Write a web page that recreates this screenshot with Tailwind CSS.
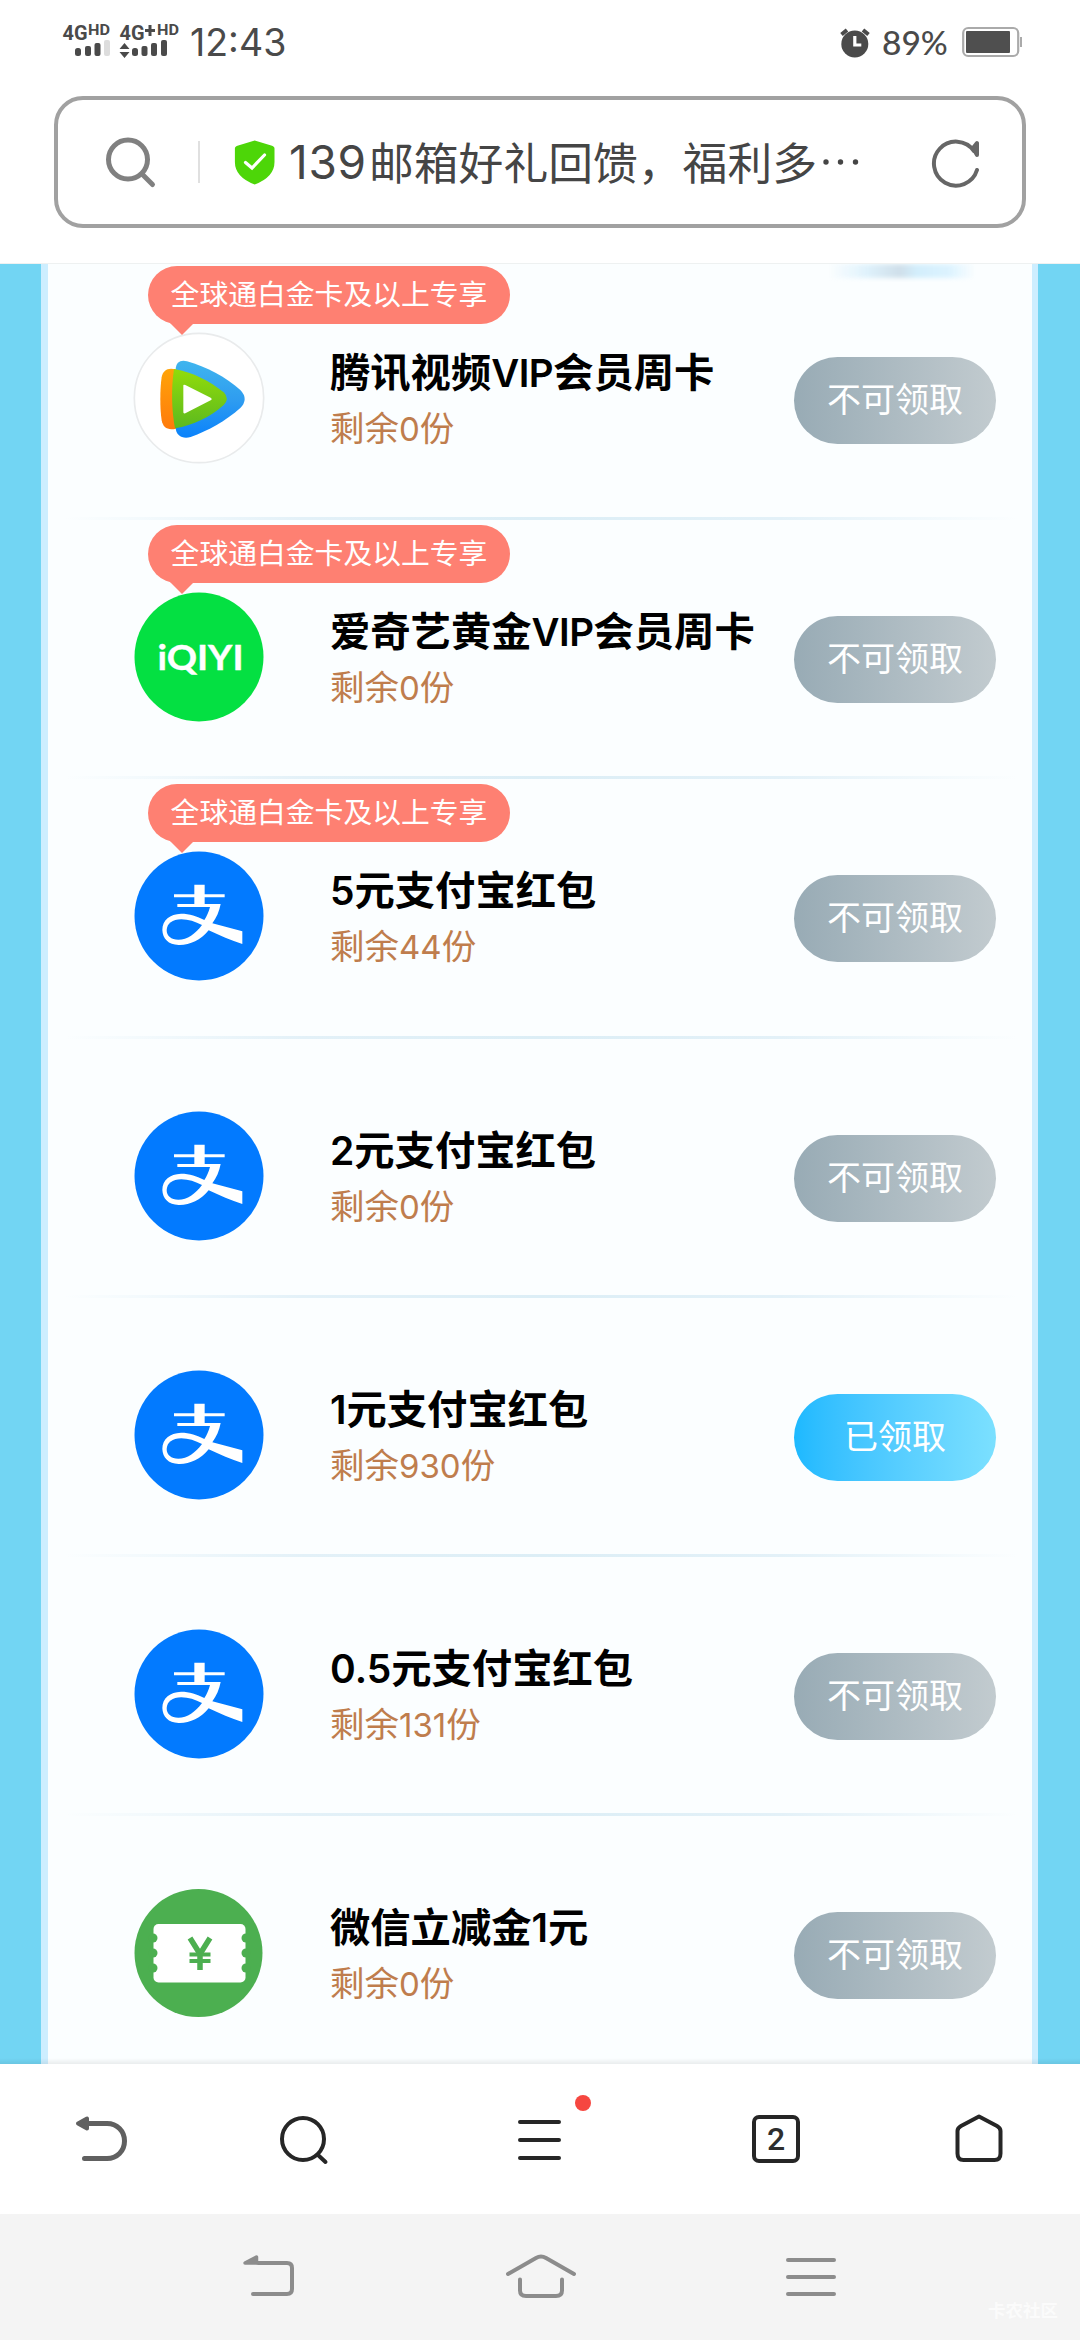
<!DOCTYPE html>
<html lang="zh-CN">
<head>
<meta charset="utf-8">
<title>139邮箱好礼回馈</title>
<script src="https://cdn.jsdelivr.net/npm/@tailwindcss/browser@4"></script>
</head>
<body class="w-[1080px] h-[2340px] overflow-hidden bg-white font-['Noto_Sans_CJK_SC',sans-serif]">

<!-- shared icons -->
<svg width="0" height="0" class="absolute">
  <defs>
    <linearGradient id="gb" x1="0" y1="0" x2="0" y2="1"><stop offset="0" stop-color="#3fb5ee"/><stop offset=".5" stop-color="#2f9df0"/><stop offset="1" stop-color="#0a82fb"/></linearGradient>
    <linearGradient id="go" x1="0" y1="0" x2="0" y2="1"><stop offset="0" stop-color="#ffa408"/><stop offset="1" stop-color="#ff7a0c"/></linearGradient>
    <linearGradient id="gg" x1="0" y1="0" x2="0" y2="1"><stop offset="0" stop-color="#92dc0a"/><stop offset="1" stop-color="#5cb91f"/></linearGradient>
    <symbol id="alipay" viewBox="26 29 396 396">
      <circle cx="224" cy="227" r="193.500" fill="#027aff"/>
      <g fill="#fff">
        <path d="M210 133h31v29h60v9h-60v20h48c-4 22-13 42-25 58l90 24v38c-34-11-68-25-101-41-25 30-57 45-90 44-31-1-48-19-49-45 0-30 23-48 56-49 26 0 48 8 70 19 7-11 13-23 17-39h-98v-9h51v-20h-61v-9h61z"/>
      </g>
      <path fill="#027aff" d="M233 254c-20-10-41-17-62-17-27 0-43 13-44 32 0 18 13 29 35 29 27 0 51-17 71-44z"/>
    </symbol>
  </defs>
</svg>

<!-- status bar -->
<header class="h-[263px] border-b border-[#eef1f1] box-content">
  <div class="h-24 pl-[62px] pr-[57px] pt-[22px] flex justify-between items-start text-[#4a4a4a]">
    <div class="flex items-start">
      <svg width="122" height="40" viewBox="62 22 122 40" fill="#4a4a4a" font-family="Roboto, sans-serif" font-weight="700">
        <text x="62.500" y="40" font-size="21" textLength="25" lengthAdjust="spacingAndGlyphs">4G</text>
        <text x="88" y="35" font-size="14" textLength="22" lengthAdjust="spacingAndGlyphs">HD</text>
        <rect x="75" y="48" width="6" height="8" rx="2.500"/><rect x="85" y="46" width="6" height="10" rx="2"/><rect x="94.500" y="43" width="6" height="13" rx="2"/><rect x="104" y="40" width="6" height="16" rx="2" fill="#ddd"/>
        <text x="119.500" y="40" font-size="21" textLength="25" lengthAdjust="spacingAndGlyphs">4G</text>
        <path d="M148.500 25h3v4h3.500v3h-3.500v4h-3v-4H145v-3h3.500z"/>
        <text x="157" y="35" font-size="14" textLength="22" lengthAdjust="spacingAndGlyphs">HD</text>
        <path d="M124.500 43l5 6h-10zM124.500 58l5-6h-10z"/>
        <rect x="132" y="48" width="6" height="8" rx="2.500"/><rect x="141.500" y="46" width="6" height="10" rx="2"/><rect x="151" y="43" width="6" height="13" rx="2"/><rect x="161" y="40" width="6" height="16" rx="2"/>
      </svg>
      <span class="ml-[6px] mt-px text-[37.5px] leading-[40px] font-normal font-['Inter',sans-serif]">12:43</span>
    </div>
    <div class="flex items-start">
      <svg class="mt-[5px]" width="30" height="32" viewBox="839 27 30 32"><circle cx="853.800" cy="44" r="13.500" fill="#4a4a4a"/><path d="M840.500 34.500l5.500-4.500M867.500 34.500l-5.500-4.500" stroke="#4a4a4a" stroke-width="4"/><path d="M853.800 36v9h6.500" fill="none" stroke="#fff" stroke-width="3.200"/></svg>
      <span class="ml-[12px] w-[69px] text-[33.5px] leading-[40px] font-medium font-['Lato',sans-serif]">89%</span>
      <svg class="ml-[10px] mt-[4px]" width="62" height="32" viewBox="959 26 62 32"><rect x="961.200" y="28" width="55" height="28" rx="5" fill="none" stroke="#aaa" stroke-width="2.200"/><rect x="964" y="31" width="44" height="22" rx="1" fill="#4f4f4f"/><rect x="1018" y="37" width="2" height="10" fill="#aaa"/></svg>
    </div>
  </div>
  <!-- address bar -->
  <div class="mx-[54px] h-[132px] rounded-[29px] border-4 border-[#a1a1a1] flex items-center pl-[45px] pr-[41px]">
    <svg class="shrink-0" width="54" height="54" viewBox="102 135 54 54" fill="none" stroke="#808080" stroke-width="5"><circle cx="127" cy="159.500" r="19.500"/><path d="M141 174l10.500 10.500" stroke-linecap="round"/></svg>
    <i class="ml-[41px] w-[2px] h-[42px] bg-[#e0e0e0]"></i>
    <svg class="ml-[34px] shrink-0" width="42" height="46" viewBox="234 139 42 46"><path d="M254.700 140.500l16.500 5q3.300 1 3.300 3v13.500q0 15-19.800 22.500q-19.800-7.500-19.800-22.500v-13.500q0-2 3.300-3z" fill="#4dd608"/><path d="M245.500 162.500l6.500 5.500 12.500-13" fill="none" stroke="#fff" stroke-width="3.200" stroke-linecap="round"/></svg>
    <div class="ml-[13px] w-[532px] shrink-0 mt-[-1px] flex text-[44.8px] leading-[60px] whitespace-nowrap text-[#454545]"><span class="w-[80px] pt-px text-[46px] font-['Inter',sans-serif] tracking-[0.7px]">139</span>邮箱好礼回馈，福利多</div>
    <svg class="shrink-0" width="40" height="8" viewBox="820 160 40 8" fill="#454545"><circle cx="825" cy="164" r="2.700"/><circle cx="839.500" cy="164" r="2.700"/><circle cx="854.500" cy="164" r="2.700"/></svg>
    <svg class="ml-auto shrink-0" width="50" height="54" viewBox="929 135 50 54" fill="none" stroke="#666" stroke-width="4" stroke-linecap="round" stroke-linejoin="round"><path d="M975 170a22 22 0 1 1-3-19M975 143v12l-4-7z"/></svg>
  </div>
</header>

<!-- reward list -->
<main class="relative h-[1800px] overflow-hidden bg-[#72d5f3] pl-[41px] pr-[42px]">
  <div class="h-full flow-root bg-[#fbfeff] border-l-[7px] border-r-[6px] border-[#cdeeff]">
    <div class="absolute left-[830px] top-0 w-[145px] h-[14px] bg-[linear-gradient(90deg,#e6f6ff00,#dff2fc_25%,#cfdfea_48%,#d3eefc_60%,#dcf3ff_82%,#dcf3ff00)] blur-[2px]"></div>
    <div class="flex flex-col -mt-[3px]">

      <section class="relative h-[259.2px] pl-[85px] flex items-start">
        <div class="absolute left-[100px] top-[5px] w-[362px] h-[58px] rounded-full bg-[#fe8072] text-white text-[28.8px] leading-[53px] text-center whitespace-nowrap">全球通白金卡及以上专享<i class="absolute left-[22px] top-[57px] border-x-[12px] border-t-[12px] border-x-transparent border-t-[#fe8072]"></i></div>
        <svg class="mt-[71px] shrink-0" width="132" height="132" viewBox="26 38 396 396">
          <circle cx="224" cy="236" r="194" fill="#fff" stroke="#e9ebec" stroke-width="5"/>
          <path d="M154 150c1-22 15-29 34-24 58 16 116 47 160 86q26 27 0 54c-44 39-96 68-149 87-25 7-44-5-45-27z" fill="url(#gb)"/>
          <path d="M108 240c0-25 1-45 4-66 4-22 18-30 43-24v178c-25 6-39-3-43-25-3-20-4-40-4-63z" fill="url(#go)"/>
          <path d="M149 149c58 10 106 36 149 70q19 19 0 38c-42 37-90 60-146 70-10-50-12-120-3-178z" fill="url(#gg)"/>
          <path d="M177 200q-1-6 6-3l76 38q6 4 0 8l-76 39q-7 2-6-5z" fill="#fff"/>
        </svg>
        <div class="ml-[65px] mt-[81px] w-[464px] whitespace-nowrap">
          <h2 class="text-[40.3px] leading-[56px] font-bold text-black">腾讯视频<span class="text-[38.5px] leading-none font-semibold font-['Inter',sans-serif] tracking-[-0.5px]">VIP</span>会员周卡</h2>
          <p class="text-[34.5px] leading-[56px] text-[#bf7d4d]">剩余<span class="text-[33px] leading-none font-['Inter',sans-serif]">0</span>份</p>
        </div>
        <button class="mt-[96px] w-[202px] h-[87px] pb-[5px] rounded-full bg-linear-to-r from-[#98abb5] to-[#c2cbcf] text-white text-[34px] leading-none">不可领取</button>
        <i class="absolute left-[17px] right-[14px] bottom-0 h-[3px] bg-[linear-gradient(90deg,#e2f0f800,#e3f1f8_25%,#dceef6_50%,#e3f1f8_75%,#e2f0f800)]"></i>
      </section>

      <section class="relative h-[259.2px] pl-[85px] flex items-start">
        <div class="absolute left-[100px] top-[5px] w-[362px] h-[58px] rounded-full bg-[#fe8072] text-white text-[28.8px] leading-[53px] text-center whitespace-nowrap">全球通白金卡及以上专享<i class="absolute left-[22px] top-[57px] border-x-[12px] border-t-[12px] border-x-transparent border-t-[#fe8072]"></i></div>
        <svg class="mt-[71px] shrink-0" width="132" height="132" viewBox="0 0 132 132" fill="#fff" font-family="Lato, sans-serif" font-weight="700" font-size="34"><circle cx="66" cy="66" r="64.500" fill="#04e042"/><text x="24.500" y="78.500" textLength="86" lengthAdjust="spacingAndGlyphs" stroke="#fff" stroke-width=".4">iQIYI</text></svg>
        <div class="ml-[65px] mt-[81px] w-[464px] whitespace-nowrap">
          <h2 class="text-[40.3px] leading-[56px] font-bold text-black">爱奇艺黄金<span class="text-[38.5px] leading-none font-semibold font-['Inter',sans-serif] tracking-[-0.5px]">VIP</span>会员周卡</h2>
          <p class="text-[34.5px] leading-[56px] text-[#bf7d4d]">剩余<span class="text-[33px] leading-none font-['Inter',sans-serif]">0</span>份</p>
        </div>
        <button class="mt-[96px] w-[202px] h-[87px] pb-[5px] rounded-full bg-linear-to-r from-[#98abb5] to-[#c2cbcf] text-white text-[34px] leading-none">不可领取</button>
        <i class="absolute left-[17px] right-[14px] bottom-0 h-[3px] bg-[linear-gradient(90deg,#e2f0f800,#e3f1f8_25%,#dceef6_50%,#e3f1f8_75%,#e2f0f800)]"></i>
      </section>

      <section class="relative h-[259.2px] pl-[85px] flex items-start">
        <div class="absolute left-[100px] top-[5px] w-[362px] h-[58px] rounded-full bg-[#fe8072] text-white text-[28.8px] leading-[53px] text-center whitespace-nowrap">全球通白金卡及以上专享<i class="absolute left-[22px] top-[57px] border-x-[12px] border-t-[12px] border-x-transparent border-t-[#fe8072]"></i></div>
        <svg class="mt-[71px] shrink-0" width="132" height="132"><use href="#alipay"/></svg>
        <div class="ml-[65px] mt-[81px] w-[464px] whitespace-nowrap">
          <h2 class="text-[40.3px] leading-[56px] font-bold text-black"><span class="text-[39px] leading-none font-semibold font-['Inter',sans-serif]">5</span>元支付宝红包</h2>
          <p class="text-[34.5px] leading-[56px] text-[#bf7d4d]">剩余<span class="text-[33px] leading-none font-['Inter',sans-serif]">44</span>份</p>
        </div>
        <button class="mt-[96px] w-[202px] h-[87px] pb-[5px] rounded-full bg-linear-to-r from-[#98abb5] to-[#c2cbcf] text-white text-[34px] leading-none">不可领取</button>
        <i class="absolute left-[17px] right-[14px] bottom-0 h-[3px] bg-[linear-gradient(90deg,#e2f0f800,#e3f1f8_25%,#dceef6_50%,#e3f1f8_75%,#e2f0f800)]"></i>
      </section>

      <section class="relative h-[259.2px] pl-[85px] flex items-start">
        <svg class="mt-[71px] shrink-0" width="132" height="132"><use href="#alipay"/></svg>
        <div class="ml-[65px] mt-[81px] w-[464px] whitespace-nowrap">
          <h2 class="text-[40.3px] leading-[56px] font-bold text-black"><span class="text-[39px] leading-none font-semibold font-['Inter',sans-serif]">2</span>元支付宝红包</h2>
          <p class="text-[34.5px] leading-[56px] text-[#bf7d4d]">剩余<span class="text-[33px] leading-none font-['Inter',sans-serif]">0</span>份</p>
        </div>
        <button class="mt-[96px] w-[202px] h-[87px] pb-[5px] rounded-full bg-linear-to-r from-[#98abb5] to-[#c2cbcf] text-white text-[34px] leading-none">不可领取</button>
        <i class="absolute left-[17px] right-[14px] bottom-0 h-[3px] bg-[linear-gradient(90deg,#e2f0f800,#e3f1f8_25%,#dceef6_50%,#e3f1f8_75%,#e2f0f800)]"></i>
      </section>

      <section class="relative h-[259.2px] pl-[85px] flex items-start">
        <svg class="mt-[71px] shrink-0" width="132" height="132"><use href="#alipay"/></svg>
        <div class="ml-[65px] mt-[81px] w-[464px] whitespace-nowrap">
          <h2 class="text-[40.3px] leading-[56px] font-bold text-black"><span class="text-[39px] leading-none font-semibold font-['Inter',sans-serif]">1</span>元支付宝红包</h2>
          <p class="text-[34.5px] leading-[56px] text-[#bf7d4d]">剩余<span class="text-[33px] leading-none font-['Inter',sans-serif]">930</span>份</p>
        </div>
        <button class="mt-[96px] w-[202px] h-[87px] pb-[5px] rounded-full bg-linear-to-r from-[#1cb9ff] to-[#7be0ff] text-white text-[34px] leading-none">已领取</button>
        <i class="absolute left-[17px] right-[14px] bottom-0 h-[3px] bg-[linear-gradient(90deg,#e2f0f800,#e3f1f8_25%,#dceef6_50%,#e3f1f8_75%,#e2f0f800)]"></i>
      </section>

      <section class="relative h-[259.2px] pl-[85px] flex items-start">
        <svg class="mt-[71px] shrink-0" width="132" height="132"><use href="#alipay"/></svg>
        <div class="ml-[65px] mt-[81px] w-[464px] whitespace-nowrap">
          <h2 class="text-[40.3px] leading-[56px] font-bold text-black"><span class="text-[39px] leading-none font-semibold font-['Inter',sans-serif]">0.5</span>元支付宝红包</h2>
          <p class="text-[34.5px] leading-[56px] text-[#bf7d4d]">剩余<span class="text-[33px] leading-none font-['Inter',sans-serif]">131</span>份</p>
        </div>
        <button class="mt-[96px] w-[202px] h-[87px] pb-[5px] rounded-full bg-linear-to-r from-[#98abb5] to-[#c2cbcf] text-white text-[34px] leading-none">不可领取</button>
        <i class="absolute left-[17px] right-[14px] bottom-0 h-[3px] bg-[linear-gradient(90deg,#e2f0f800,#e3f1f8_25%,#dceef6_50%,#e3f1f8_75%,#e2f0f800)]"></i>
      </section>

      <section class="relative h-[259.2px] pl-[85px] flex items-start">
        <svg class="mt-[71px] shrink-0" width="132" height="132" viewBox="0 0 132 132">
          <circle cx="65.500" cy="66" r="64" fill="#4caf50"/>
          <rect x="20.500" y="37" width="92" height="58.500" rx="5" fill="#fff"/>
          <g fill="#4caf50"><circle cx="20" cy="51" r="4.500"/><circle cx="20" cy="66" r="4.500"/><circle cx="20" cy="81" r="4.500"/><circle cx="113" cy="51" r="4.500"/><circle cx="113" cy="66" r="4.500"/><circle cx="113" cy="81" r="4.500"/></g>
          <path d="M57 51l10 16 10-16M67 66v17" fill="none" stroke="#4caf50" stroke-width="5.500"/><path d="M56.500 67.500h21M56.500 74h21" fill="none" stroke="#4caf50" stroke-width="3.800"/>
        </svg>
        <div class="ml-[65px] mt-[81px] w-[464px] whitespace-nowrap">
          <h2 class="text-[40.3px] leading-[56px] font-bold text-black">微信立减金<span class="text-[39px] leading-none font-semibold font-['Inter',sans-serif]">1</span>元</h2>
          <p class="text-[34.5px] leading-[56px] text-[#bf7d4d]">剩余<span class="text-[33px] leading-none font-['Inter',sans-serif]">0</span>份</p>
        </div>
        <button class="mt-[96px] w-[202px] h-[87px] pb-[5px] rounded-full bg-linear-to-r from-[#98abb5] to-[#c2cbcf] text-white text-[34px] leading-none">不可领取</button>
      </section>
    </div>
  </div>
  <div class="absolute inset-x-0 bottom-0 h-[6px] bg-linear-to-t from-black/7 to-transparent"></div>
</main>

<!-- browser toolbar -->
<nav class="h-[150px] bg-white pl-[75px] flex items-center">
  <svg width="54" height="54" viewBox="75 2111 54 54" fill="none" stroke="#606060" stroke-width="5" stroke-linecap="round"><path d="M88 2122.500h19c10 0 17.500 7.500 17.500 17.500s-7.500 17.500-17.500 17.500H84.500"/><path d="M78 2122.500l9-5v10z" fill="#606060" stroke-width="4" stroke-linejoin="round"/></svg>
  <svg class="ml-[148px]" width="54" height="54" viewBox="277 2111 54 54" fill="none" stroke="#262626" stroke-width="4" stroke-linecap="round"><ellipse cx="303" cy="2138" rx="21" ry="21"/><path d="M318 2154l7.500 7"/></svg>
  <div class="relative ml-[182px] w-[54px] h-[54px]">
    <svg width="54" height="54" viewBox="513 2111 54 54" stroke="#262626" stroke-width="4" stroke-linecap="round"><path d="M520 2121h39M520 2139h39M520 2157h39"/></svg>
    <i class="absolute left-[62px] top-[-17px] w-4 h-4 rounded-full bg-[#f64740]"></i>
  </div>
  <div class="ml-[185px] w-12 h-12 rounded-[7px] border-4 border-[#262626] flex items-center justify-center text-[32px] leading-none font-medium text-[#2e2e2e] font-['Roboto',sans-serif]">2</div>
  <svg class="ml-[154px]" width="50" height="54" viewBox="954 2111 50 54" fill="none" stroke="#262626" stroke-width="4" stroke-linejoin="round"><path d="M979 2115.500l18 9.500q3.500 2 3.500 5v22.500q0 6.500-6 6.500h-31q-6 0-6-6.500V2130q0-3 3.500-5z"/></svg>
</nav>

<!-- system navigation -->
<footer class="relative h-[126px] bg-[#f4f4f4] pl-[240px] flex items-center">
  <svg width="58" height="54" viewBox="240 2250 58 54" fill="none" stroke="#8c8c8c" stroke-width="4" stroke-linecap="round" stroke-linejoin="round"><path d="M258 2263h29q5 0 5 5v21q0 5-5 5h-34"/><path d="M245 2263l11.500-6v6z" fill="#8c8c8c" stroke-width="3.500"/></svg>
  <svg class="ml-[206px]" width="74" height="54" viewBox="504 2250 74 54" fill="none" stroke="#8c8c8c" stroke-width="4" stroke-linecap="round"><path d="M508 2274l28-16q5-3 10 0l28 16M520 2279.500v11q0 5.500 6 5.500h30q6 0 6-5.500v-11"/></svg>
  <svg class="ml-[206px]" width="54" height="54" viewBox="784 2250 54 54" stroke="#8c8c8c" stroke-width="4" stroke-linecap="round"><path d="M788 2260h46M788 2277h46M788 2294h46"/></svg>
  <span class="absolute right-[22px] bottom-[18px] text-[17.5px] leading-[24px] font-bold text-[#fbfbfb]">卡农社区</span>
</footer>
</body>
</html>
